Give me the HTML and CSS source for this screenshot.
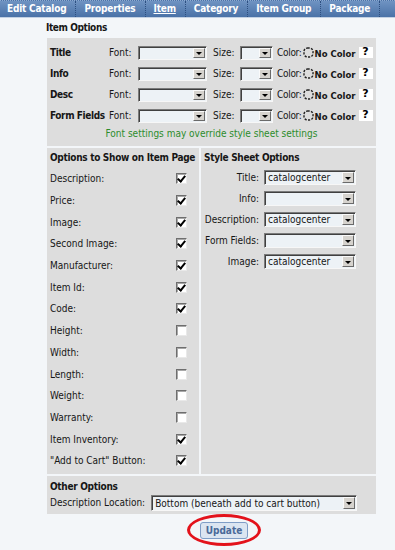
FILE: index.html
```html
<!DOCTYPE html>
<html lang="en">
<head>
<meta charset="UTF-8">
<title>Item Options</title>
<link rel="stylesheet" href="styles.css">
</head>
<body>
    <div class="tabs">
        <span class="tab">Edit Catalog</span>
        <span class="tab">Properties</span>
        <span class="tab active">Item</span>
        <span class="tab">Category</span>
        <span class="tab">Item Group</span>
        <span class="tab">Package</span>
    </div>

    <div class="page">
        <div class="heading">Item Options</div>

        <div class="panel">
            <!-- font settings -->
            <div class="fonts">
                <div class="frow">
                    <span class="f-label">Title</span>
                    <span class="f-key">Font:</span>
                    <span class="sel sel-font"><span class="sel-text"></span><span class="sel-btn"></span></span>
                    <span class="f-key f-size">Size:</span>
                    <span class="sel sel-size"><span class="sel-text"></span><span class="sel-btn"></span></span>
                    <span class="f-key f-color">Color:</span>
                    <svg class="swatch" width="11" height="11" viewBox="0 0 11 11"><rect x="1" y="1" width="9" height="9" rx="3.5" fill="none" stroke="#222" stroke-width="1.4" stroke-dasharray="2.2 1.3"/></svg>
                    <span class="nocolor">No Color</span>
                    <span class="help">?</span>
                </div>
                <div class="frow">
                    <span class="f-label">Info</span>
                    <span class="f-key">Font:</span>
                    <span class="sel sel-font"><span class="sel-text"></span><span class="sel-btn"></span></span>
                    <span class="f-key f-size">Size:</span>
                    <span class="sel sel-size"><span class="sel-text"></span><span class="sel-btn"></span></span>
                    <span class="f-key f-color">Color:</span>
                    <svg class="swatch" width="11" height="11" viewBox="0 0 11 11"><rect x="1" y="1" width="9" height="9" rx="3.5" fill="none" stroke="#222" stroke-width="1.4" stroke-dasharray="2.2 1.3"/></svg>
                    <span class="nocolor">No Color</span>
                    <span class="help">?</span>
                </div>
                <div class="frow">
                    <span class="f-label">Desc</span>
                    <span class="f-key">Font:</span>
                    <span class="sel sel-font"><span class="sel-text"></span><span class="sel-btn"></span></span>
                    <span class="f-key f-size">Size:</span>
                    <span class="sel sel-size"><span class="sel-text"></span><span class="sel-btn"></span></span>
                    <span class="f-key f-color">Color:</span>
                    <svg class="swatch" width="11" height="11" viewBox="0 0 11 11"><rect x="1" y="1" width="9" height="9" rx="3.5" fill="none" stroke="#222" stroke-width="1.4" stroke-dasharray="2.2 1.3"/></svg>
                    <span class="nocolor">No Color</span>
                    <span class="help">?</span>
                </div>
                <div class="frow">
                    <span class="f-label">Form Fields</span>
                    <span class="f-key">Font:</span>
                    <span class="sel sel-font"><span class="sel-text"></span><span class="sel-btn"></span></span>
                    <span class="f-key f-size">Size:</span>
                    <span class="sel sel-size"><span class="sel-text"></span><span class="sel-btn"></span></span>
                    <span class="f-key f-color">Color:</span>
                    <svg class="swatch" width="11" height="11" viewBox="0 0 11 11"><rect x="1" y="1" width="9" height="9" rx="3.5" fill="none" stroke="#222" stroke-width="1.4" stroke-dasharray="2.2 1.3"/></svg>
                    <span class="nocolor">No Color</span>
                    <span class="help">?</span>
                </div>
                <div class="note">Font settings may override style sheet settings</div>
            </div>

            <div class="cols">
                <!-- what is shown on the item page -->
                <div class="col-left">
                    <div class="sub">Options to Show on Item Page</div>
                    <div class="crow"><span>Description:</span><span class="cb on"></span></div>
                    <div class="crow"><span>Price:</span><span class="cb on"></span></div>
                    <div class="crow"><span>Image:</span><span class="cb on"></span></div>
                    <div class="crow"><span>Second Image:</span><span class="cb on"></span></div>
                    <div class="crow"><span>Manufacturer:</span><span class="cb on"></span></div>
                    <div class="crow"><span>Item Id:</span><span class="cb on"></span></div>
                    <div class="crow"><span>Code:</span><span class="cb on"></span></div>
                    <div class="crow"><span>Height:</span><span class="cb"></span></div>
                    <div class="crow"><span>Width:</span><span class="cb"></span></div>
                    <div class="crow"><span>Length:</span><span class="cb"></span></div>
                    <div class="crow"><span>Weight:</span><span class="cb"></span></div>
                    <div class="crow"><span>Warranty:</span><span class="cb"></span></div>
                    <div class="crow"><span>Item Inventory:</span><span class="cb on"></span></div>
                    <div class="crow"><span>"Add to Cart" Button:</span><span class="cb on"></span></div>
                </div>

                <!-- style sheet classes -->
                <div class="col-right">
                    <div class="sub">Style Sheet Options</div>
                    <div class="srow"><span class="s-label">Title:</span><span class="sel sel-css"><span class="sel-text">catalogcenter</span><span class="sel-btn"></span></span></div>
                    <div class="srow"><span class="s-label">Info:</span><span class="sel sel-css"><span class="sel-text"></span><span class="sel-btn"></span></span></div>
                    <div class="srow"><span class="s-label">Description:</span><span class="sel sel-css"><span class="sel-text">catalogcenter</span><span class="sel-btn"></span></span></div>
                    <div class="srow"><span class="s-label">Form Fields:</span><span class="sel sel-css"><span class="sel-text"></span><span class="sel-btn"></span></span></div>
                    <div class="srow"><span class="s-label">Image:</span><span class="sel sel-css"><span class="sel-text">catalogcenter</span><span class="sel-btn"></span></span></div>
                </div>
            </div>

            <div class="other">
                <div class="sub">Other Options</div>
                <div class="orow">
                    <span>Description Location:</span>
                    <span class="sel sel-loc"><span class="sel-text">Bottom (beneath add to cart button)</span><span class="sel-btn"></span></span>
                </div>
            </div>
        </div>

        <div class="actions">
            <span class="ring"><button class="update">Update</button></span>
        </div>
    </div>
</body>
</html>
```

FILE: styles.css
```css
body{
    margin:0;
    background:#f3f6f9;
    font-family:"DejaVu Sans Condensed", "DejaVu Sans", sans-serif;
    font-size:10px;
    color:#161616;
}

/* tab bar */
.tabs{
    display:flex;
    height:16px;
    background:linear-gradient(#6f93c2, #4a72a7);
    border-top:1px dotted #8eaad0;
    border-bottom:1px solid #c3d1e3;
}
.tab{
    padding:0 9px 0 8px;
    line-height:15px;
    color:#fff;
    font-weight:bold;
    font-size:10px;
    letter-spacing:-0.2px;
    border-right:1px dotted #2d4f80;
}
.tab:first-child{
    padding-left:7px;
}
.active{
    text-decoration:underline;
}

.page{
    padding:3px 0 0 47px;
}
.heading{
    font-weight:bold;
    letter-spacing:-0.4px;
    line-height:14px;
    margin:0 0 3px -1px;
}

.panel{
    width:329px;
    display:grid;
    gap:2px;
}
.fonts, .col-left, .col-right, .other{
    background:#dddddd;
}

/* font rows */
.fonts{
    padding:4px 0;
}
.frow{
    display:flex;
    align-items:center;
    height:21px;
    padding-left:3px;
}
.f-label{
    width:59px;
    font-weight:bold;
    letter-spacing:-0.4px;
}
.f-key{
    width:29px;
}
.f-size{
    width:27px;
    margin-left:6px;
}
.f-color{
    width:auto;
    margin:0 1px 0 4px;
    letter-spacing:-0.3px;
}
.swatch{
    margin-right:1px;
}
.nocolor{
    font-family:"DejaVu Sans", sans-serif;
    font-size:8.5px;
    font-weight:bold;
    width:41px;
    margin-top:2px;
}
.help{
    width:14px;
    height:11px;
    margin-left:3px;
    background:#fff;
    font-family:"DejaVu Sans", sans-serif;
    font-weight:bold;
    font-size:11px;
    line-height:10px;
    text-align:center;
    color:#000;
}
.note{
    text-align:center;
    line-height:16px;
    color:#2c8c2c;
}

/* fake windows selects */
.sel{
    display:flex;
    box-sizing:border-box;
    height:14px;
    border:1px solid;
    border-color:#7b7b7b #f7f7f7 #f7f7f7 #7b7b7b;
    box-shadow:inset 1px 1px 0 #404040;
    background:#edf2f6;
}
.sel-text{
    flex:1;
    padding:1px 0 0 3px;
    line-height:11px;
    white-space:nowrap;
    overflow:hidden;
}
.sel-btn{
    box-sizing:border-box;
    width:12px;
    margin:1px 1px 1px 0;
    background:#d6d3ce;
    border:1px solid;
    border-color:#fafafa #6a6a6a #6a6a6a #fafafa;
    display:flex;
    align-items:center;
    justify-content:center;
}
.sel-btn::after{
    content:"";
    border-left:3px solid transparent;
    border-right:3px solid transparent;
    border-top:3px solid #000;
    margin-top:1px;
}
.sel-font{ width:69px; }
.sel-size{ width:33px; }
.sel-css{ width:92px; height:15px; }
.sel-loc{ width:206px; height:16px; }
.sel-loc .sel-text{ line-height:13px; }

/* two columns */
.cols{
    display:grid;
    grid-template-columns:152px 1fr;
    gap:2px;
}
.sub{
    font-weight:bold;
    letter-spacing:-0.3px;
    line-height:14px;
    padding:3px 0 0 3px;
}
.col-left{
    padding-bottom:2px;
}
.col-left .sub{
    margin-bottom:3px;
}
.crow{
    display:flex;
    justify-content:space-between;
    align-items:center;
    height:21.7px;
    padding:0 12px 0 3px;
}
.cb{
    box-sizing:border-box;
    width:11px;
    height:11px;
    background:#fff;
    border:1px solid;
    border-color:#6e6e6e #e9e9e9 #e9e9e9 #6e6e6e;
    box-shadow:inset 1px 1px 0 #a8a8a8;
    position:relative;
}
.cb.on::after{
    content:"";
    position:absolute;
    left:2px;
    top:0px;
    width:3px;
    height:6px;
    border:solid #000;
    border-width:0 2px 2px 0;
    transform:rotate(40deg);
}

.col-right .sub{
    margin-bottom:2px;
}
.srow{
    display:flex;
    align-items:center;
    height:21px;
    padding-left:3px;
}
.s-label{
    width:55px;
    text-align:right;
    margin-right:5px;
}

.other{
    padding-bottom:2px;
}
.other .sub{
    padding-top:4px;
}
.orow{
    display:flex;
    align-items:center;
    gap:6px;
    height:18px;
    padding-left:3px;
}

/* update button */
.actions{
    padding-left:140px;
}
.ring{
    display:inline-block;
    padding:5px 10px 4px;
    border:3px solid #e3121b;
    border-radius:50%;
}
.update{
    display:block;
    width:48px;
    height:17px;
    padding:0;
    background:#dbe5f1;
    border:1px solid #7f9dc6;
    border-radius:3px;
    color:#4a6a99;
    font-family:"DejaVu Sans Condensed", "DejaVu Sans", sans-serif;
    font-weight:bold;
    font-size:10px;
}
```
